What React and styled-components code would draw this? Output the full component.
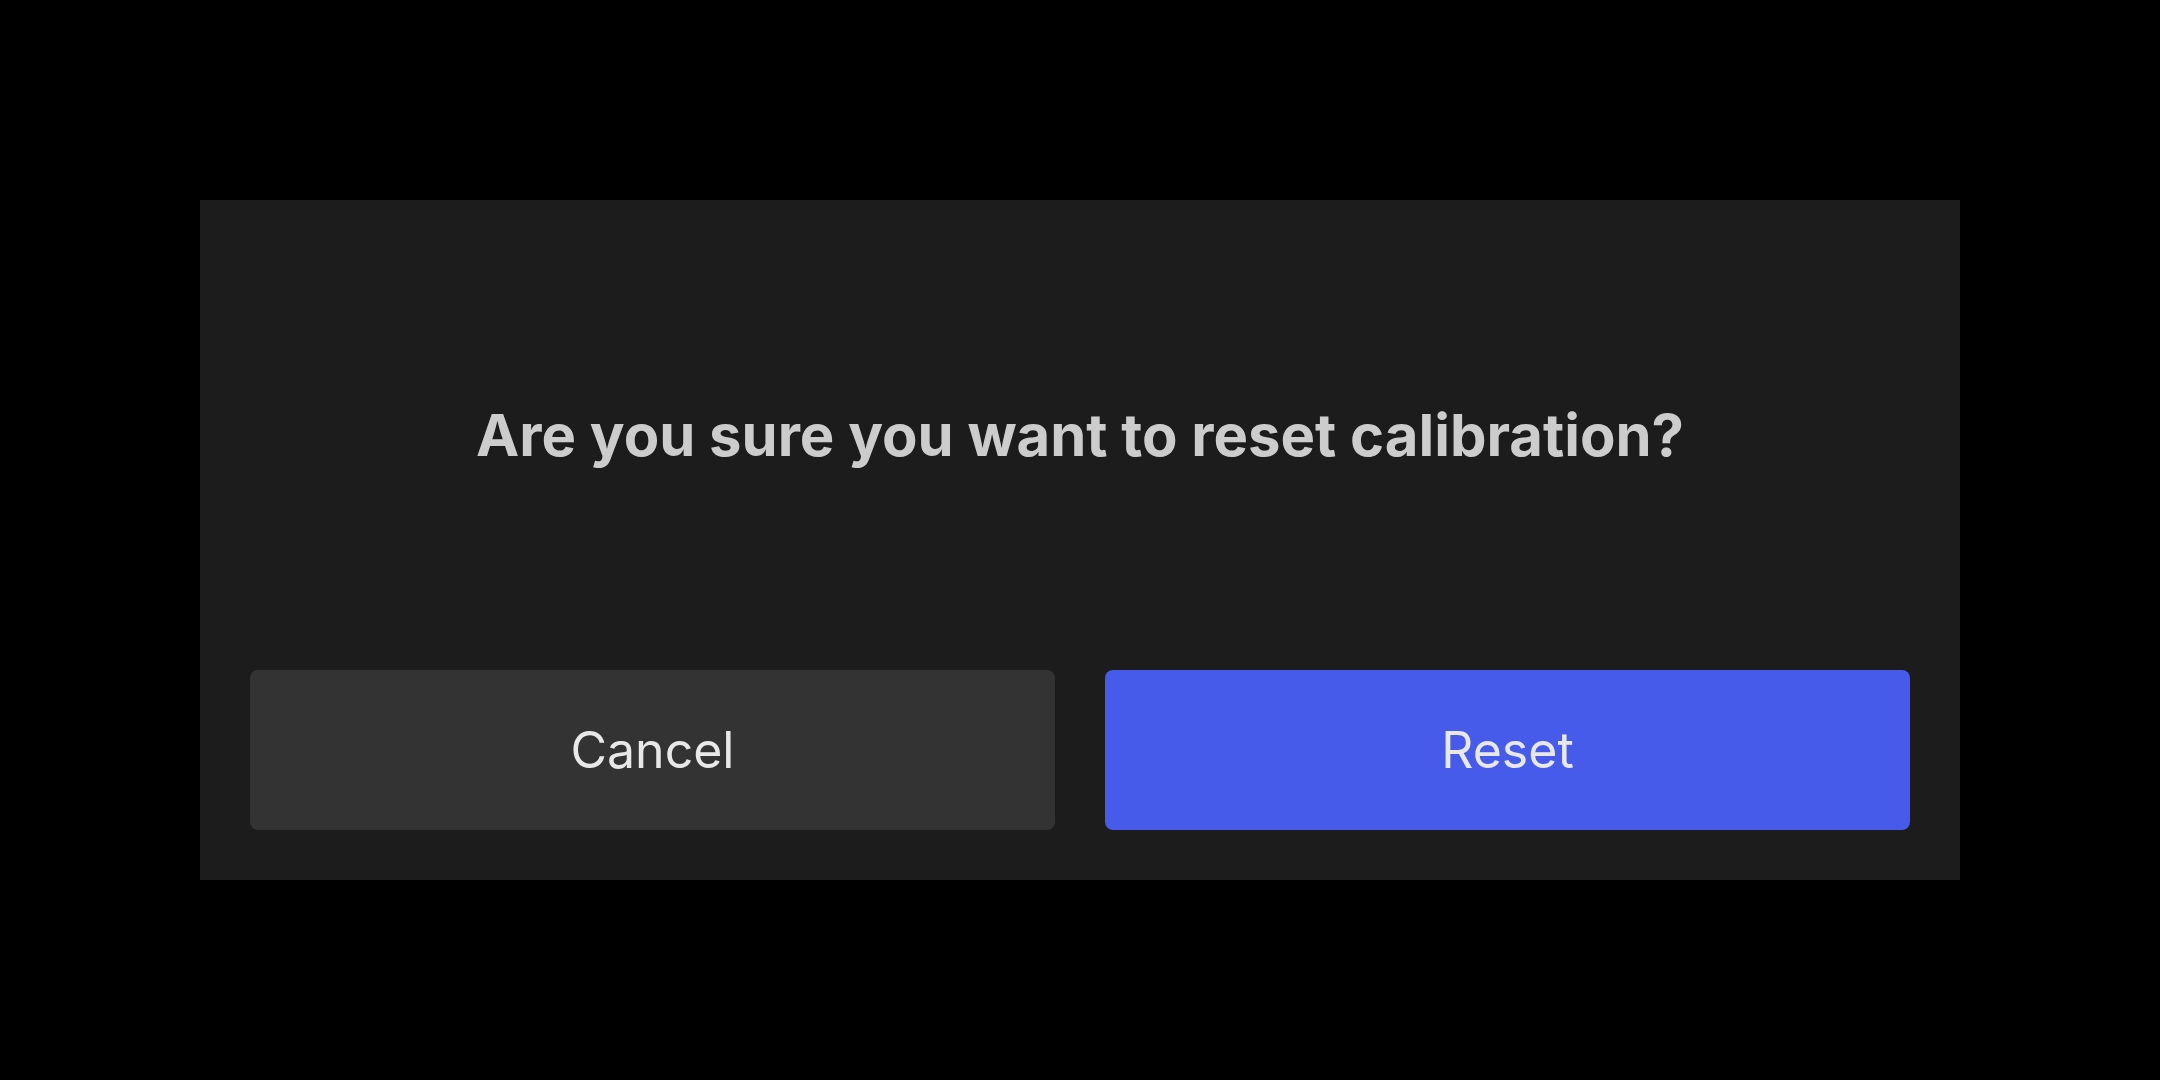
import React from "react";
import styled, { createGlobalStyle } from "styled-components";

const Global = createGlobalStyle`
  html, body { margin: 0; padding: 0; background: #000; }
  body { font-family: Inter, "Noto Sans", sans-serif; }
  #root { width: 2160px; height: 1080px; }
`;

const Page = styled.div`
  width: 2160px;
  height: 1080px;
  background: #000;
  display: flex;
  align-items: center;
  justify-content: center;
`;

const Dialog = styled.div`
  width: 1760px;
  height: 680px;
  box-sizing: border-box;
  background: #1c1c1c;
  padding: 0 50px 50px;
  display: flex;
  flex-direction: column;
`;

const Message = styled.div`
  flex: 1;
  display: flex;
  align-items: center;
  justify-content: center;
  color: #cccccc;
  font-size: 58px;
  font-weight: 700;
  letter-spacing: 0;
`;

const Actions = styled.div`
  display: grid;
  grid-template-columns: 1fr 1fr;
  gap: 50px;
`;

const Button = styled.button`
  height: 160px;
  border: none;
  border-radius: 8px;
  background: ${(p) => (p.$primary ? "#465be9" : "#333333")};
  color: #e8e8e8;
  font-family: Inter, "Noto Sans", sans-serif;
  font-size: 50px;
  font-weight: 400;
  cursor: pointer;
`;

export default function App() {
  return (
    <>
      <Global />
      <Page>
        <Dialog>
          <Message>Are you sure you want to reset calibration?</Message>
          <Actions>
            <Button>Cancel</Button>
            <Button $primary>Reset</Button>
          </Actions>
        </Dialog>
      </Page>
    </>
  );
}
